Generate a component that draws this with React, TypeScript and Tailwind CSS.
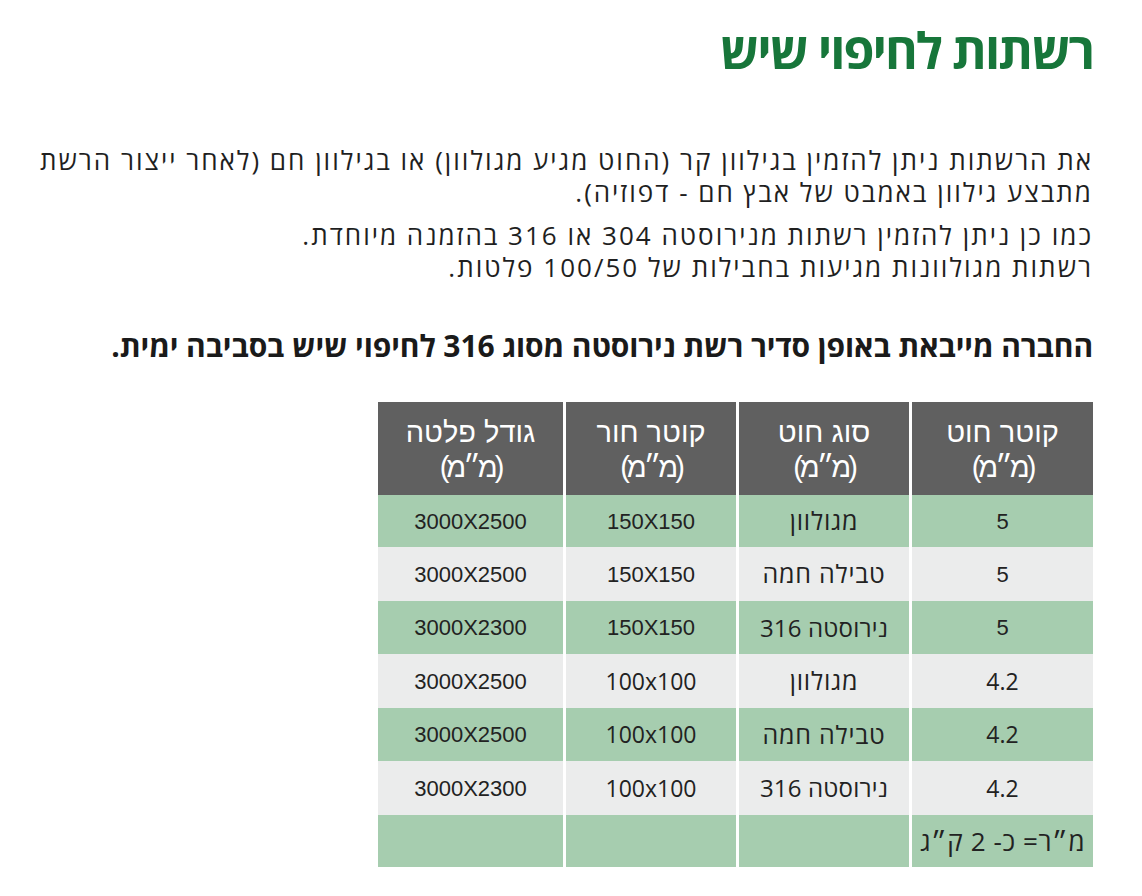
import React from "react";

const OS = "font-['Open_Sans','Noto_Sans',sans-serif]";
const AR = "font-['Liberation_Sans',Arial,sans-serif]";

type Cell = { t: string; k: "he" | "he2" | "ar" | "os" | "last" | "empty" };
const rows: Cell[][] = [
  [{ t: "5", k: "ar" }, { t: "מגולוון", k: "he" }, { t: "150X150", k: "ar" }, { t: "3000X2500", k: "ar" }],
  [{ t: "5", k: "ar" }, { t: "טבילה חמה", k: "he" }, { t: "150X150", k: "ar" }, { t: "3000X2500", k: "ar" }],
  [{ t: "5", k: "ar" }, { t: "נירוסטה 316", k: "he2" }, { t: "150X150", k: "ar" }, { t: "3000X2300", k: "ar" }],
  [{ t: "4.2", k: "os" }, { t: "מגולוון", k: "he" }, { t: "100x100", k: "os" }, { t: "3000X2500", k: "ar" }],
  [{ t: "4.2", k: "os" }, { t: "טבילה חמה", k: "he" }, { t: "100x100", k: "os" }, { t: "3000X2500", k: "ar" }],
  [{ t: "4.2", k: "os" }, { t: "נירוסטה 316", k: "he2" }, { t: "100x100", k: "os" }, { t: "3000X2300", k: "ar" }],
  [{ t: "מ״ר= כ- 2 ק״ג", k: "last" }, { t: "", k: "empty" }, { t: "", k: "empty" }, { t: "", k: "empty" }],
];

const kindClass: Record<Cell["k"], string> = {
  he: `${OS} text-[25px] tracking-[0.8px]`,
  he2: `${OS} text-[24px] tracking-[0.2px]`,
  ar: `${AR} text-[22px]`,
  os: `${OS} text-[23px]`,
  last: `${OS} text-[26px] tracking-[0.6px]`,
  empty: "",
};

const headers = ["קוטר חוט", "סוג חוט", "קוטר חור", "גודל פלטה"];

export default function App() {
  return (
    <div dir="rtl" className="w-[1142px] h-[896px] bg-white overflow-hidden pr-[49px] pt-[20px]">
      <h1 className={`${OS} text-[50px] leading-[60px] font-bold text-[#17763a] tracking-[-2px]`}>
        רשתות לחיפוי שיש
      </h1>
      <div className={`${OS} mt-[64px] text-[26px] leading-[32px] text-[#1f1f1f] whitespace-nowrap tracking-[2px]`}>
        <p>את הרשתות ניתן להזמין בגילוון קר (החוט מגיע מגולוון) או בגילוון חם (לאחר ייצור הרשת</p>
        <p>מתבצע גילוון באמבט של אבץ חם - דפוזיה).</p>
        <p className="mt-[11px]">כמו כן ניתן להזמין רשתות מנירוסטה 304 או 316 בהזמנה מיוחדת.</p>
        <p>רשתות מגולוונות מגיעות בחבילות של 100/50 פלטות.</p>
      </div>
      <p className={`${OS} mt-[47px] text-[30px] leading-[32px] font-bold text-[#1a1a1a] whitespace-nowrap tracking-[-0.1px]`}>
        החברה מייבאת באופן סדיר רשת נירוסטה מסוג 316 לחיפוי שיש בסביבה ימית.
      </p>
      <div className="mt-[40px] grid grid-cols-[181px_170px_170px_185px] grid-rows-[93px_52px_54px_53px_54px_53px_54px_52px] gap-x-[3px] w-[715px]">
        {headers.map((h) => (
          <div
            key={h}
            className={`${AR} bg-[#606060] text-white text-[29px] leading-[35px] flex flex-col items-center justify-center pt-[2px]`}
          >
            <span>{h}</span>
            <span className="tracking-[-3px]">(מ״מ)</span>
          </div>
        ))}
        {rows.map((r, i) =>
          r.map((c, j) => (
            <div
              key={`${i}-${j}`}
              className={`${kindClass[c.k]} flex items-center justify-center text-[#222] ${
                i % 2 === 0 ? "bg-[#a6cdaf]" : "bg-[#ebecec]"
              }`}
            >
              {c.t}
            </div>
          ))
        )}
      </div>
    </div>
  );
}
